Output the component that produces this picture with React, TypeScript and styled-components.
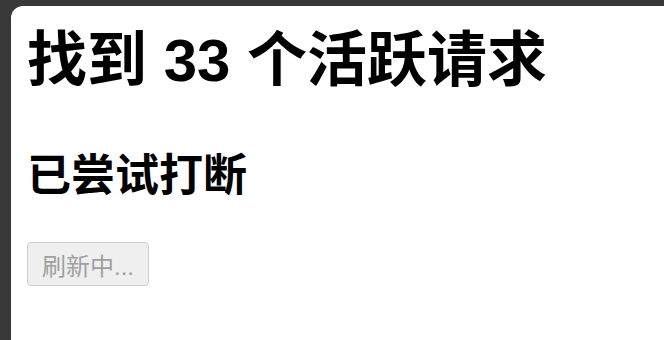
import styled, { createGlobalStyle } from 'styled-components';

const GlobalStyle = createGlobalStyle`
  html, body {
    margin: 0;
    padding: 0;
    background: #383838;
  }
  body {
    font-family: 'Liberation Sans', 'Noto Sans CJK SC', sans-serif;
  }
`;

const Frame = styled.div`
  width: 664px;
  height: 340px;
  box-sizing: border-box;
  padding: 6px 0 0 11px;
  background: #383838;
  overflow: hidden;
`;

const Panel = styled.main`
  height: 100%;
  box-sizing: border-box;
  background: #fff;
  border-top-left-radius: 12px;
  padding: 1px 16px 0 16px;
  color: #000;
`;

const Title = styled.h1`
  margin: 22px 0 0;
  font-size: 60px;
  line-height: 64px;
  font-weight: 700;
  white-space: nowrap;
`;

const Status = styled.h2`
  margin: 59px 0 0;
  font-size: 44px;
  line-height: 48px;
  font-weight: 700;
`;

const RefreshButton = styled.button`
  margin-top: 42px;
  height: 44px;
  box-sizing: border-box;
  padding: 0 14px;
  font-family: 'Liberation Sans', 'Noto Sans CJK SC', sans-serif;
  font-size: 24px;
  color: #a0a0a0;
  background: #efefef;
  border: 1px solid #cfcfcf;
  border-radius: 4px;
`;

export default function App() {
  return (
    <>
      <GlobalStyle />
      <Frame>
        <Panel>
          <Title>找到 33 个活跃请求</Title>
          <Status>已尝试打断</Status>
          <RefreshButton disabled>刷新中...</RefreshButton>
        </Panel>
      </Frame>
    </>
  );
}
